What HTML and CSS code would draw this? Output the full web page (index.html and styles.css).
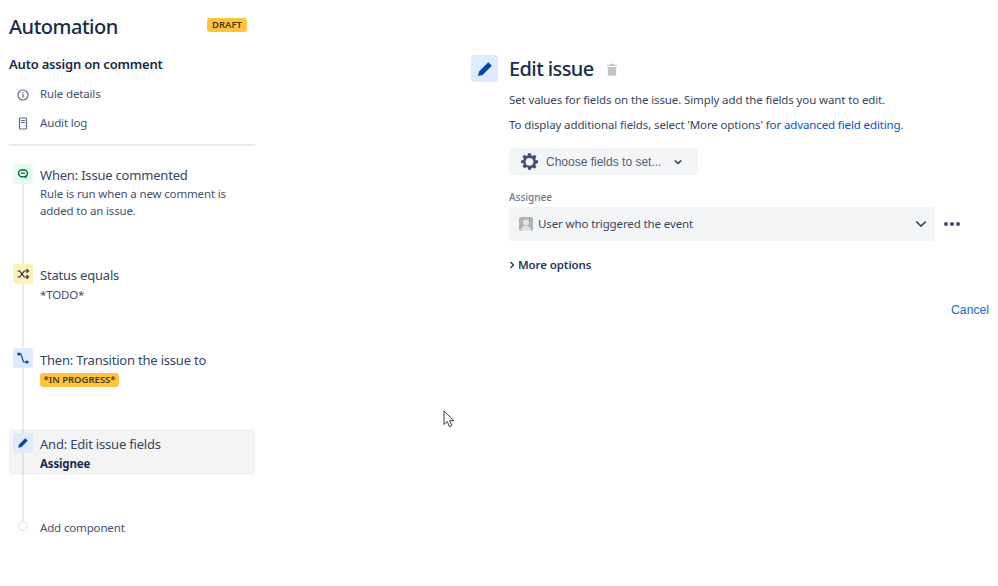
FILE: index.html
```html
<!DOCTYPE html>
<html lang="en">
<head>
  <meta charset="UTF-8" />
  <title>Automation</title>
  <link rel="stylesheet" href="styles.css">
</head>
<body>
  <div class="page">
    <aside class="sidebar">
      <div class="sidebar-head">
        <h1>Automation</h1>
        <span class="lozenge lozenge-draft">DRAFT</span>
      </div>
      <h2>Auto assign on comment</h2>
      <a class="nav-item">
        <svg width="14" height="14" viewBox="0 0 14 14" fill="none"><circle cx="7" cy="7" r="5" stroke="#5e6c84" stroke-width="1.2"/><rect x="6.4" y="6.2" width="1.2" height="3.4" fill="#5e6c84"/><rect x="6.4" y="4.200" width="1.2" height="1.2" fill="#5e6c84"/></svg>
        <span>Rule details</span>
      </a>
      <a class="nav-item">
        <svg width="14" height="14" viewBox="0 0 14 14" fill="none"><rect x="3.500" y="1" width="7" height="11" rx="1" stroke="#5e6c84" stroke-width="1.200"/><rect x="5" y="3" width="4" height="1" fill="#5e6c84"/><rect x="5" y="5" width="4" height="1" fill="#5e6c84"/></svg>
        <span>Audit log</span>
      </a>
      <hr class="divider">

      <div class="timeline">
        <div class="step step-when">
          <span class="step-icon icon-green">
            <svg width="12" height="12" viewBox="0 0 12 12" fill="none"><ellipse cx="6" cy="5.300" rx="4.500" ry="3.600" stroke="#006644" stroke-width="1.400"/><path d="M3.800 5.200h4.400" stroke="#006644" stroke-width="1.200"/><path d="M6.500 8.500 10 10.500 9.300 7.500z" fill="#006644"/></svg>
          </span>
          <div class="step-body">
            <div class="step-title">When: Issue commented</div>
            <div class="step-text">Rule is run when a new comment is<br>added to an issue.</div>
          </div>
        </div>

        <div class="step step-status">
          <span class="step-icon icon-yellow">
            <svg width="14" height="14" viewBox="0 0 14 14" fill="none" stroke="#172b4d" stroke-width="1.200"><path d="M1.500 4h2.200l4.600 6h3"/><path d="M1.500 10h2.200l4.600-6h3"/><path d="M10.500 2.200 12.500 4l-2 1.800M10.500 8.200l2 1.800-2 1.800"/></svg>
          </span>
          <div class="step-body">
            <div class="step-title">Status equals</div>
            <div class="step-text">*TODO*</div>
          </div>
        </div>

        <div class="step step-then">
          <span class="step-icon icon-blue">
            <svg width="14" height="14" viewBox="0 0 14 14" fill="none"><path d="M3 3h2l2.500 8H11" stroke="#0747a6" stroke-width="1.200"/><circle cx="2.800" cy="3" r="1.600" fill="#0747a6"/><circle cx="11" cy="11" r="1.600" fill="#0747a6"/></svg>
          </span>
          <div class="step-body">
            <div class="step-title">Then: Transition the issue to</div>
            <span class="lozenge lozenge-status">*IN PROGRESS*</span>
          </div>
        </div>

        <div class="step step-and">
          <span class="step-icon icon-blue">
            <svg width="12" height="12" viewBox="0 0 12 12"><path d="M8.300 1.300 10.700 3.700 4.500 9.900 1.200 10.800 2.100 7.500z" fill="#0747a6"/></svg>
          </span>
          <div class="step-body">
            <div class="step-title">And: Edit issue fields</div>
            <div class="step-text step-strong">Assignee</div>
          </div>
        </div>

        <div class="step step-add">
          <span class="add-dot"></span>
          <div class="step-text add-label">Add component</div>
        </div>
      </div>
    </aside>

    <main class="editor">
      <div class="editor-icon">
        <svg width="18" height="18" viewBox="0 0 18 18"><path d="M12.300 2.200 15.800 5.700 6.600 14.900 1.900 16.100 3.100 11.400z" fill="#0747a6"/></svg>
      </div>
      <div class="editor-body">
        <div class="editor-title">
          <h3>Edit issue</h3>
          <svg width="12" height="13" viewBox="0 0 12 13"><path d="M4.500.8h3l.5 1h3v1.300H1V1.800h3zM1.800 4h8.400v7.500c0 .8-.5 1.300-1.200 1.300H3c-.7 0-1.200-.5-1.200-1.300z" fill="#c4c4c4"/></svg>
        </div>
        <p class="desc">Set values for fields on the issue. Simply add the fields you want to edit.</p>
        <p class="desc">To display additional fields, select 'More options' for <a class="link">advanced field editing</a>.</p>

        <button class="choose-btn" type="button">
          <svg width="17" height="17" viewBox="0 0 24 24"><path fill="#42526e" fill-rule="evenodd" d="M10 1h4l.6 3.100 1.900.8L19.100 3.100l2.800 2.800-1.800 2.600.8 1.900L24 11v4l-3.100.6-.8 1.900 1.800 2.600-2.800 2.800-2.600-1.800-1.900.8L14 24h-4l-.6-3.100-1.900-.8-2.600 1.800-2.800-2.800 1.800-2.600-.8-1.900L0 15v-4l3.100-.6.800-1.900L2.100 5.900l2.800-2.800 2.600 1.800 1.900-.8zM12 7.500a5.500 5.500 0 1 0 0 11 5.500 5.500 0 0 0 0-11z" transform="translate(0 -.5)"/></svg>
          <span>Choose fields to set...</span>
          <svg class="chev-small" width="10" height="10" viewBox="0 0 10 10" fill="none"><path d="M1.800 3.500 5 6.500l3.200-3" stroke="#253858" stroke-width="1.600"/></svg>
        </button>

        <label class="field-label">Assignee</label>
        <div class="field-row">
          <div class="select">
            <span class="avatar">
              <svg width="14" height="14" viewBox="0 0 14 14"><rect width="14" height="14" rx="2" fill="#b3b3b3"/><circle cx="7" cy="5.500" r="3" fill="#e3e3e3"/><path d="M2 14c0-3.500 2-5 5-5s5 1.500 5 5z" fill="#e3e3e3"/></svg>
            </span>
            <span class="select-value">User who triggered the event</span>
            <svg class="select-chev" width="12" height="8" viewBox="0 0 12 8" fill="none"><path d="M1.200 1.500 6 6l4.800-4.500" stroke="#344563" stroke-width="1.700"/></svg>
          </div>
          <div class="more-dots"><i></i><i></i><i></i></div>
        </div>

        <div class="more-options">
          <svg width="6" height="8" viewBox="0 0 6 8" fill="none"><path d="M1.500 1 4.500 4l-3 3" stroke="#172b4d" stroke-width="1.200"/></svg>
          More options
        </div>
        <div class="actions"><a class="cancel">Cancel</a></div>
      </div>
    </main>
  </div>

  <svg class="cursor" width="13" height="18" viewBox="0 0 13 18"><path d="M1 1v13.500l3.200-3 2.200 5.200 2.400-1-2.200-5h4.400z" fill="#fff" stroke="#3c3c3c" stroke-width="1"/></svg>
</body>
</html>
```

FILE: styles.css
```css
* {
  margin: 0;
  padding: 0;
  box-sizing: border-box;
}

html, body {
  height: 100%;
  background: #fff;
  color: #172b4d;
  font-family: "Noto Sans", "Open Sans", sans-serif;
  overflow: hidden;
}

.page {
  display: flex;
  height: 586px;
}

/* Left column */
.sidebar {
  width: 246px;
  margin-left: 9px;
  padding-top: 14px;
  flex-shrink: 0;
}

.sidebar-head {
  display: flex;
  justify-content: space-between;
  align-items: center;
  height: 26px;
  padding-right: 8px;
}

h1 {
  font-size: 20px;
  font-weight: 500;
  line-height: 26px;
  letter-spacing: -0.5px;
}

.lozenge {
  display: inline-block;
  background: #ffc33f;
  color: #4a3a12;
  font-size: 9.500px;
  font-weight: 600;
  line-height: 14px;
  border-radius: 3px;
  padding: 0 6px;
}

.lozenge-draft {
  margin-top: -5px;
  height: 14px;
  padding: 0 5px;
}

.sidebar h2 {
  font-size: 13px;
  font-weight: 600;
  line-height: 18px;
  margin-top: 15px;
  letter-spacing: -0.2px;
}

.nav-item {
  display: flex;
  align-items: center;
  gap: 10px;
  height: 29px;
  padding-left: 7px;
  font-size: 11.500px;
  letter-spacing: -0.150px;
  color: #42526e;
}

.nav-item span {
  margin-bottom: 2px;
}

.nav-item:first-of-type {
  margin-top: 7px;
}

.divider {
  border: none;
  border-top: 2px solid #ebecf0;
  margin-top: 6px;
}

/* Rule steps */
.timeline {
  position: relative;
  margin-top: 18px;
}

.timeline::before {
  content: "";
  position: absolute;
  left: 13px;
  top: 10px;
  width: 2px;
  height: 350px;
  background: #ebecf0;
}

.step {
  position: relative;
  display: flex;
  gap: 7px;
  padding-left: 4px;
}

.step-when { height: 100px; }
.step-status { height: 84px; }
.step-then { height: 81px; }

.step-and {
  height: 46px;
  padding-top: 4px;
  background: rgba(0, 0, 0, 0.045);
  border-radius: 3px;
}

.step-add {
  margin-top: 45px;
  align-items: center;
  gap: 12px;
  padding-left: 9px;
}

.step-icon {
  width: 20px;
  height: 20px;
  border-radius: 3px;
  display: flex;
  justify-content: center;
  align-items: center;
  flex-shrink: 0;
}

.icon-green { background: #e3fcef; }
.icon-yellow { background: #fff0b3; }
.icon-blue { background: #deebff; }

.step-body {
  padding-top: 1px;
}

.step-then .step-body {
  padding-top: 2px;
}

.step-title {
  font-size: 13px;
  letter-spacing: -0.200px;
  line-height: 20px;
  color: #344563;
}

.step-text {
  font-size: 11.500px;
  letter-spacing: -0.150px;
  line-height: 16px;
  color: #42526e;
  margin-top: 2px;
}

.step-when .step-text {
  margin-top: 0;
  line-height: 17px;
}

.step-strong {
  font-weight: 700;
  color: #172b4d;
}

.step-then .lozenge {
  display: block;
  width: 79px;
  margin-top: 3px;
  padding: 0;
  text-align: center;
}

.add-dot {
  width: 10px;
  height: 10px;
  margin-bottom: 4px;
  border: 1px solid #dfe1e6;
  border-radius: 50%;
  background: #fff;
}

.add-label {
  margin-top: 0;
}

/* Right column */
.editor {
  display: flex;
  gap: 11px;
  margin-left: 216px;
  padding-top: 55px;
  flex: 1;
  min-width: 0;
}

.editor-icon {
  width: 27px;
  height: 27px;
  background: #deebff;
  border-radius: 3px;
  display: flex;
  justify-content: center;
  align-items: center;
  flex-shrink: 0;
}

.editor-body {
  flex: 1;
  min-width: 0;
  padding-right: 9px;
}

.editor-title {
  display: flex;
  align-items: center;
  gap: 12px;
  height: 28px;
}

h3 {
  font-size: 20px;
  font-weight: 500;
  line-height: 28px;
  letter-spacing: -0.600px;
}

.desc {
  font-size: 11.500px;
  letter-spacing: -0.120px;
  line-height: 16px;
  color: #344563;
}

.editor-title + .desc { margin-top: 9px; }
.desc + .desc { margin-top: 9px; }

.link {
  color: #0052cc;
}

.choose-btn {
  display: flex;
  align-items: center;
  width: 189px;
  height: 27px;
  margin-top: 15px;
  padding-left: 12px;
  background: #f4f5f7;
  border: none;
  border-radius: 3px;
  color: #505f79;
  font-family: "Liberation Sans", sans-serif;
  font-size: 12px;
}

.choose-btn span {
  margin-left: 8px;
}

.chev-small {
  margin-left: 12px;
}

.field-label {
  display: block;
  font-size: 10px;
  line-height: 14px;
  font-weight: 500;
  color: #6b778c;
  margin-top: 15px;
}

.field-row {
  display: flex;
  align-items: center;
  gap: 9px;
  margin-top: 3px;
}

.select {
  display: flex;
  align-items: center;
  width: 426px;
  height: 34px;
  padding: 0 8px 0 10px;
  background: #f4f5f7;
  border-radius: 3px;
}

.avatar {
  display: flex;
  margin-right: 5px;
}

.select-value {
  flex: 1;
  margin-bottom: 2px;
  font-size: 11.500px;
  letter-spacing: -0.120px;
  color: #344563;
}

.more-dots {
  display: flex;
  gap: 2px;
}

.more-dots i {
  width: 4px;
  height: 4px;
  border-radius: 50%;
  background: #42526e;
}

.more-options {
  display: flex;
  align-items: center;
  gap: 3px;
  margin-top: 16px;
  font-size: 11.500px;
  letter-spacing: -0.100px;
  font-weight: 600;
  line-height: 16px;
  color: #253858;
}

.actions {
  display: flex;
  justify-content: flex-end;
  margin-top: 29px;
}

.cancel {
  font-family: "Liberation Sans", sans-serif;
  font-size: 12.200px;
  line-height: 16px;
  color: #1a66d6;
}

/* Mouse pointer caught in the capture */
.cursor {
  position: absolute;
  left: 443px;
  top: 410px;
}
```
